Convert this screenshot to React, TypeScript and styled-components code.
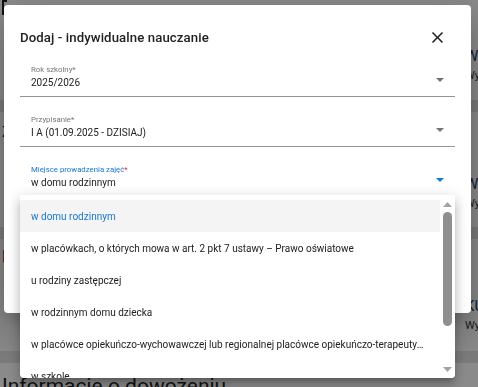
import React from "react";
import styled, { createGlobalStyle } from "styled-components";

const GlobalStyle = createGlobalStyle`
  html, body {
    margin: 0;
    padding: 0;
    overflow: hidden;
    background: #ffffff;
    font-family: Roboto, "Liberation Sans", Arial, sans-serif;
    color: #212121;
  }
  * { box-sizing: border-box; }
`;

interface FocusProps {
    $focused?: boolean;
}

const options = [
    "w domu rodzinnym",
    "w placówkach, o których mowa w art. 2 pkt 7 ustawy – Prawo oświatowe",
    "u rodziny zastępczej",
    "w rodzinnym domu dziecka",
    "w placówce opiekuńczo-wychowawczej lub regionalnej placówce opiekuńczo-terapeutycznej",
    "w szkole",
];

const ArrowDown = ({ color }: { color: string }) => (
    <svg width="8" height="4" viewBox="0 0 8 4">
        <path d="M0 0 L8 0 L4 4 Z" fill={color} />
    </svg>
);

const Field: React.FC<{ label: string; value: string; focused?: boolean; children?: React.ReactNode }> = ({
    label,
    value,
    focused,
    children,
}) => (
    <FieldBox $focused={focused}>
        <FieldLabel $focused={focused}>
            {label}
            <Required $focused={focused}>*</Required>
        </FieldLabel>
        <ValueRow>
            <span>{value}</span>
            <ArrowSlot>
                <ArrowDown color={focused ? "#1976d2" : "#757575"} />
            </ArrowSlot>
        </ValueRow>
        {children}
    </FieldBox>
);

export default function App() {
    return (
        <>
            <GlobalStyle />
            <Page>
                <PageHeader>
                    <AccentMark />
                    <PageTitle>Dane ucznia</PageTitle>
                </PageHeader>
                <PageRow $height={85}>
                    <span />
                    <RightText $offset={32}>
                        <RightTitle>Wybrany typ</RightTitle>
                        <RightSub>Wybrane z listy</RightSub>
                    </RightText>
                </PageRow>
                <Band />
                <PageRow $height={115}>
                    <LeftTitle $offset={11}>Zajęcia</LeftTitle>
                    <RightText $offset={63}>
                        <RightTitle>Wybór</RightTitle>
                        <RightSub>Wybrane z listy</RightSub>
                    </RightText>
                </PageRow>
                <Band />
                <PageRow $height={112}>
                    <LeftTitle $offset={8}>|</LeftTitle>
                    <RightText $offset={58}>
                        <RightTitle>KURS</RightTitle>
                        <RightSub>Wybrane z listy</RightSub>
                    </RightText>
                </PageRow>
                <Band />
                <SectionTitle>Informacje o dowożeniu</SectionTitle>
            </Page>

            <Backdrop>
                <Dialog>
                    <DialogHeader>
                        <DialogTitle>Dodaj - indywidualne nauczanie</DialogTitle>
                        <CloseButton type="button" aria-label="Zamknij">
                            <svg width="19" height="19" viewBox="0 0 24 24">
                                <path
                                    d="M19 6.41 17.59 5 12 10.59 6.41 5 5 6.41 10.59 12 5 17.59 6.41 19 12 13.41 17.59 19 19 17.59 13.41 12z"
                                    fill="#212121"
                                />
                            </svg>
                        </CloseButton>
                    </DialogHeader>

                    <Field label="Rok szkolny" value="2025/2026" />
                    <Field label="Przypisanie" value="I A (01.09.2025 - DZISIAJ)" />
                    <Field label="Miejsce prowadzenia zajęć" value="w domu rodzinnym" focused>
                        <Menu>
                            <MenuList>
                                {options.map((option, i) => (
                                    <MenuItem key={option} $selected={i === 0}>
                                        <ItemText>{option}</ItemText>
                                    </MenuItem>
                                ))}
                            </MenuList>
                            <ScrollBar>
                                <ScrollArrow>
                                    <svg width="9" height="5" viewBox="0 0 9 5">
                                        <path d="M0 5 L9 5 L4.5 0 Z" fill="#a3a3a3" />
                                    </svg>
                                </ScrollArrow>
                                <ScrollTrack>
                                    <Thumb />
                                </ScrollTrack>
                                <ScrollArrow>
                                    <svg width="9" height="5" viewBox="0 0 9 5">
                                        <path d="M0 0 L9 0 L4.5 5 Z" fill="#a3a3a3" />
                                    </svg>
                                </ScrollArrow>
                            </ScrollBar>
                        </Menu>
                    </Field>
                </Dialog>
            </Backdrop>
        </>
    );
}

const Page = styled.div`
    width: 940px;
    height: 387px;
    overflow: hidden;
`;

const PageHeader = styled.div`
    display: flex;
    align-items: flex-start;
    gap: 6px;
    height: 15px;
    padding-left: 2px;
`;

const AccentMark = styled.div`
    width: 5px;
    height: 15px;
    border-left: 2px solid #1f1f1f;
    border-top: 2px solid #1f1f1f;
`;

const PageTitle = styled.h1`
    margin: -21px 0 0;
    font-size: 20px;
    line-height: 24px;
    font-weight: 500;
    color: #1f1f1f;
`;

const PageRow = styled.div<{ $height: number }>`
    display: grid;
    grid-template-columns: 463px 1fr;
    align-items: start;
    height: ${({ $height }) => $height}px;
    padding-left: 2px;
`;

const LeftTitle = styled.div<{ $offset: number }>`
    margin-top: ${({ $offset }) => $offset}px;
    font-size: 15px;
    line-height: 18px;
    color: #1f1f1f;
`;

const RightText = styled.div<{ $offset: number }>`
    grid-column: 2;
    display: flex;
    flex-direction: column;
    gap: 4px;
    margin-top: ${({ $offset }) => $offset}px;
`;

const RightTitle = styled.div`
    font-size: 15px;
    line-height: 18px;
    color: #27355a;
`;

const RightSub = styled.div`
    font-size: 11px;
    line-height: 14px;
    color: #333;
`;

const Band = styled.div`
    height: 12px;
    background: #e4e4e4;
`;

const SectionTitle = styled.h2`
    margin: 10px 0 0;
    padding-left: 2px;
    font-size: 21px;
    font-weight: 400;
    line-height: 26px;
    color: #1f1f1f;
`;

const Backdrop = styled.div`
    position: fixed;
    inset: 0;
    background: rgba(0, 0, 0, 0.46);
    padding: 5px 0 0 4px;
`;

const Dialog = styled.div`
    width: 467px;
    height: 308px;
    background: #ffffff;
    border-radius: 4px;
    padding: 22.5px 16px 0;
    box-shadow: 0 11px 15px -7px rgba(0, 0, 0, 0.2), 0 24px 38px 3px rgba(0, 0, 0, 0.14),
        0 9px 46px 8px rgba(0, 0, 0, 0.12);
`;

const DialogHeader = styled.div`
    display: flex;
    align-items: center;
    justify-content: space-between;
    height: 20px;
    padding-right: 8px;
`;

const DialogTitle = styled.h2`
    margin: 0;
    font-size: 13.2px;
    line-height: 20px;
    font-weight: 500;
    color: #212121;
    letter-spacing: 0.1px;
`;

const CloseButton = styled.button`
    display: flex;
    align-items: center;
    justify-content: center;
    padding: 0;
    border: none;
    background: transparent;
    cursor: pointer;
`;

const FieldBox = styled.div<FocusProps>`
    position: relative;
    margin-top: 17px;
    padding-bottom: ${({ $focused }) => ($focused ? "4px" : "5px")};
    border-bottom: ${({ $focused }) => ($focused ? "2px solid #1976d2" : "1px solid #949494")};

    &:nth-of-type(2) {
        margin-top: 16.5px;
    }
`;

const FieldLabel = styled.div<FocusProps>`
    padding-left: 11px;
    font-size: 7.8px;
    line-height: 11px;
    color: ${({ $focused }) => ($focused ? "#1976d2" : "#757575")};
`;

const Required = styled.span<FocusProps>`
    color: ${({ $focused }) => ($focused ? "#d32f2f" : "inherit")};
`;

const ValueRow = styled.div`
    display: flex;
    justify-content: space-between;
    height: 16px;
    padding: 0 11px;
    font-size: 10px;
    line-height: 16px;
    color: #212121;
`;

const ArrowSlot = styled.span`
    display: flex;
    margin-top: 2.5px;
    height: 4px;
`;

const Menu = styled.div`
    position: absolute;
    top: 100%;
    left: 0;
    right: 0;
    height: 183px;
    display: flex;
    background: #ffffff;
    border-radius: 0 0 4px 4px;
    overflow: hidden;
    z-index: 2;
    box-shadow: 0 5px 5px -3px rgba(0, 0, 0, 0.2), 0 8px 10px 1px rgba(0, 0, 0, 0.14),
        0 3px 14px 2px rgba(0, 0, 0, 0.12);
`;

const MenuList = styled.ul`
    flex: 1;
    min-width: 0;
    margin: 0;
    padding: 5px 0 0;
    list-style: none;
    overflow: hidden;
`;

const MenuItem = styled.li<{ $selected?: boolean }>`
    display: flex;
    align-items: center;
    height: 32px;
    padding: 0 13px 0 11px;
    font-size: 10px;
    color: ${({ $selected }) => ($selected ? "#1976d2" : "#212121")};
    background: ${({ $selected }) => ($selected ? "#f4f4f4" : "transparent")};
`;

const ItemText = styled.span`
    white-space: nowrap;
    overflow: hidden;
    text-overflow: ellipsis;
`;

const ScrollBar = styled.div`
    width: 15px;
    display: flex;
    flex-direction: column;
    align-items: center;
    background: #ffffff;
    padding: 7px 0 6px;
`;

const ScrollArrow = styled.div`
    display: flex;
    height: 5px;
`;

const ScrollTrack = styled.div`
    flex: 1;
    width: 100%;
    display: flex;
    justify-content: center;
    padding: 5px 0 37px;
`;

const Thumb = styled.div`
    width: 9px;
    height: 114px;
    border-radius: 5px;
    background: #8f8f8f;
`;
